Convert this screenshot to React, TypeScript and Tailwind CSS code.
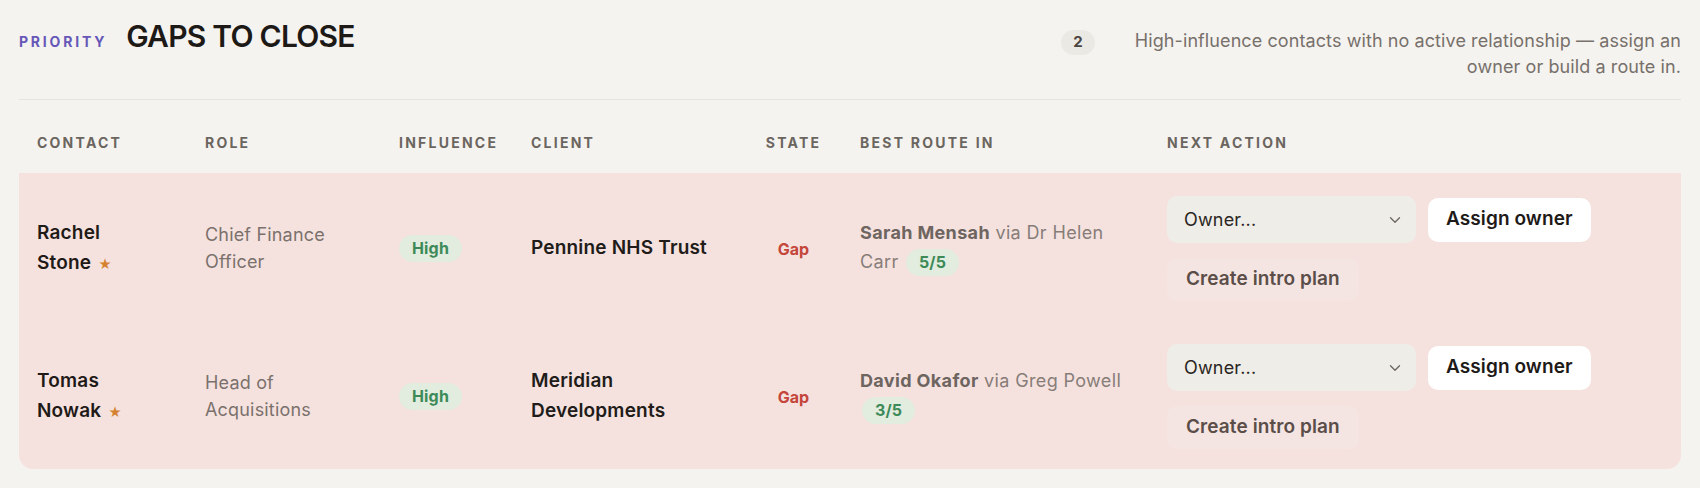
import { ChevronDown } from "lucide-react";

const cols = "grid grid-cols-[168px_194px_132px_232px_97px_307px_1fr]";

const rows = [
  {
    name: "Rachel Stone",
    role: "Chief Finance Officer",
    client: "Pennine NHS Trust",
    contact: "Sarah Mensah",
    via: "Dr Helen Carr",
    score: "5/5",
  },
  {
    name: "Tomas Nowak",
    role: "Head of Acquisitions",
    client: "Meridian Developments",
    contact: "David Okafor",
    via: "Greg Powell",
    score: "3/5",
  },
];

const Pill = ({ children }: { children: React.ReactNode }) => (
  <span className="inline-flex items-center rounded-full bg-[#e2ecdf] px-[13px] h-[27px] text-[16px] font-bold text-[#3d8a58] leading-none tracking-[0.01em]">
    {children}
  </span>
);

export default function App() {
  return (
    <div className="min-h-screen bg-[#f5f3ef] px-[19px] font-['Inter',sans-serif] text-[#1f1a17]">
      {/* Section header */}
      <div className="flex items-baseline justify-between border-b border-[#e6e3dd] pt-[18px] pb-[19px]">
        <div className="flex items-baseline gap-[19px]">
          <span className="text-[14px] font-bold tracking-[0.2em] text-[#6657b8]">PRIORITY</span>
          <h2 className="text-[30px] leading-[36px] font-semibold tracking-tight text-[#1c1917]">GAPS TO CLOSE</h2>
        </div>
        <div className="flex items-baseline gap-[30px]">
          <span className="inline-flex h-[25px] min-w-[34px] items-center justify-center rounded-full bg-[#ebe9e3] text-[15px] font-bold text-[#4a4541]">
            2
          </span>
          <p className="w-[556px] text-right text-[18px] leading-[26px] tracking-[0.005em] text-[#77706b]">
            High-influence contacts with no active relationship — assign an owner or build a route in.
          </p>
        </div>
      </div>

      {/* Table header */}
      <div className={`${cols} pt-[33px] pb-[20px] text-[14px] leading-[20px] font-bold tracking-[0.16em] text-[#6b6560]`}>
        <div className="px-[18px]">CONTACT</div>
        <div className="px-[18px]">ROLE</div>
        <div className="px-[18px]">INFLUENCE</div>
        <div className="px-[18px]">CLIENT</div>
        <div className="px-[18px] text-center">STATE</div>
        <div className="px-[18px]">BEST ROUTE IN</div>
        <div className="px-[18px]">NEXT ACTION</div>
      </div>

      {/* Rows */}
      <div className="rounded-b-[14px] bg-[#f5e2df]">
        {rows.map((r) => (
          <div key={r.name} className={`${cols} h-[148px] items-center`}>
            <div className="pl-[18px] pr-[36px] pt-[3px] text-[19px] leading-[30px] font-semibold tracking-[0.01em]">
              {r.name} <span className="ml-[2px] text-[13px] text-[#d4822f]">★</span>
            </div>
            <div className="px-[18px] pt-[2px] text-[18px] leading-[27px] tracking-[0.01em] text-[#7b716c]">{r.role}</div>
            <div className="px-[18px] pt-[2px]">
              <Pill>High</Pill>
            </div>
            <div className="px-[18px] pt-[2px] text-[19px] leading-[30px] font-semibold tracking-[0.01em] text-[#211c19]">
              {r.client}
            </div>
            <div className="px-[18px] pt-[3px] text-center text-[16px] font-bold text-[#c4463b]">Gap</div>
            <div className="px-[18px] text-[18px] leading-[29px] tracking-[0.02em] text-[#877d78]">
              <span className="font-bold text-[#6e6560]">{r.contact}</span> via {r.via}{" "}
              <span className="ml-[2px]">
                <Pill>{r.score}</Pill>
              </span>
            </div>
            <div className="px-[18px] pt-[3px] flex flex-col items-start gap-[15px]">
              <div className="flex items-center gap-[12px]">
                <div className="flex h-[47px] w-[249px] items-center justify-between rounded-[10px] bg-[#efede8] pl-[17px] pr-[12px] text-[18px] tracking-[0.01em] text-[#2a2522]">
                  <span>Owner...</span>
                  <ChevronDown className="h-[18px] w-[18px] text-[#6b6560]" strokeWidth={1.75} />
                </div>
                <button className="h-[44px] rounded-[10px] bg-white px-[18px] text-[19px] font-semibold tracking-[0.005em] text-[#1e1a17]">
                  Assign owner
                </button>
              </div>
              <button className="h-[43px] rounded-[10px] bg-[#f4e5e2] px-[19px] text-[19px] font-semibold tracking-[0.005em] text-[#5b4d48]">
                Create intro plan
              </button>
            </div>
          </div>
        ))}
      </div>
    </div>
  );
}
